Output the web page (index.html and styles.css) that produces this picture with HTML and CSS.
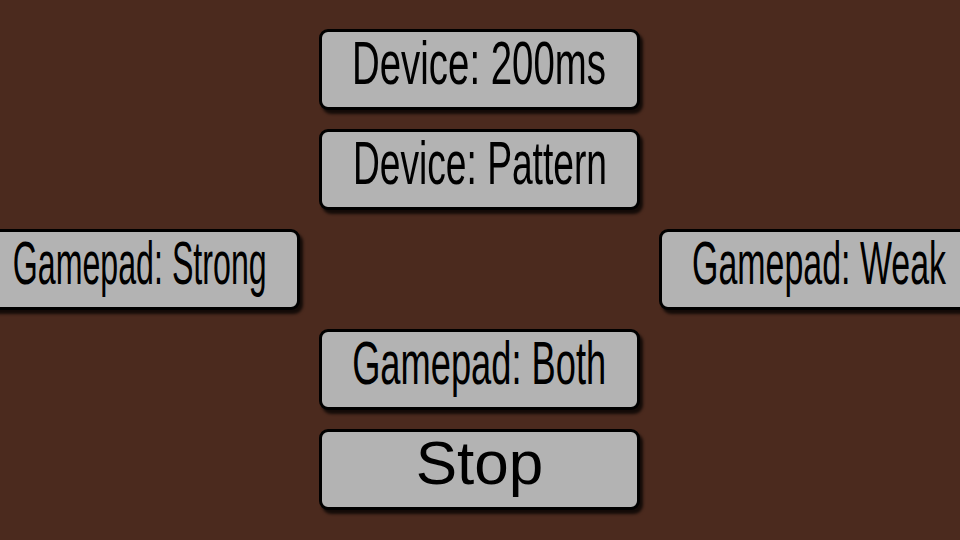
FILE: index.html
```html
<!DOCTYPE html>
<html>
<head>
<meta charset="utf-8">
<link rel="stylesheet" href="styles.css">
</head>
<body>
<div class="pad">
  <div class="cell r1 c2"><button class="btn"><span class="label">Device: 200ms</span></button></div>
  <div class="cell r2 c2"><button class="btn"><span class="label">Device: Pattern</span></button></div>
  <div class="cell r3 c1"><button class="btn"><span class="label">Gamepad: Strong</span></button></div>
  <div class="cell r3 c3"><button class="btn"><span class="label">Gamepad: Weak</span></button></div>
  <div class="cell r4 c2"><button class="btn"><span class="label">Gamepad: Both</span></button></div>
  <div class="cell r5 c2"><button class="btn"><span class="label">Stop</span></button></div>
</div>
<script src="fit.js"></script>
</body>
</html>
```

FILE: styles.css
```css
html, body {
  margin: 0;
  padding: 0;
  width: 960px;
  height: 540px;
  overflow: hidden;
  background: #4b2a1e;
}
.pad {
  display: grid;
  grid-template-columns: repeat(3, 321px);
  grid-template-rows: repeat(5, 81px);
  column-gap: 19px;
  row-gap: 19px;
  width: 1001px;
  margin-left: -21px;
  padding-top: 29px;
}
.c1 { grid-column: 1; }
.c2 { grid-column: 2; }
.c3 { grid-column: 3; }
.r1 { grid-row: 1; }
.r2 { grid-row: 2; }
.r3 { grid-row: 3; }
.r4 { grid-row: 4; }
.r5 { grid-row: 5; }
.cell { display: flex; }
.btn {
  box-sizing: border-box;
  width: 321px;
  height: 81px;
  margin: 0;
  padding: 0 0 13px 0;
  background: #b3b3b3;
  border: 3px solid #000;
  border-radius: 9px;
  box-shadow: 3px 4px 3px rgba(0,0,0,0.75);
  display: flex;
  align-items: center;
  justify-content: center;
  font-family: "Liberation Sans", Arial, sans-serif;
  font-size: 62px;
  line-height: 1;
  color: #000;
  overflow: visible;
}
.label {
  display: block;
  white-space: nowrap;
  transform-origin: center center;
}
```

FILE: fit.js
```js
document.querySelectorAll('.label').forEach(function (el) {
  var max = 254;
  var w = el.getBoundingClientRect().width;
  if (w > max) {
    el.style.transform = 'scaleX(' + (max / w) + ')';
  }
});
```
